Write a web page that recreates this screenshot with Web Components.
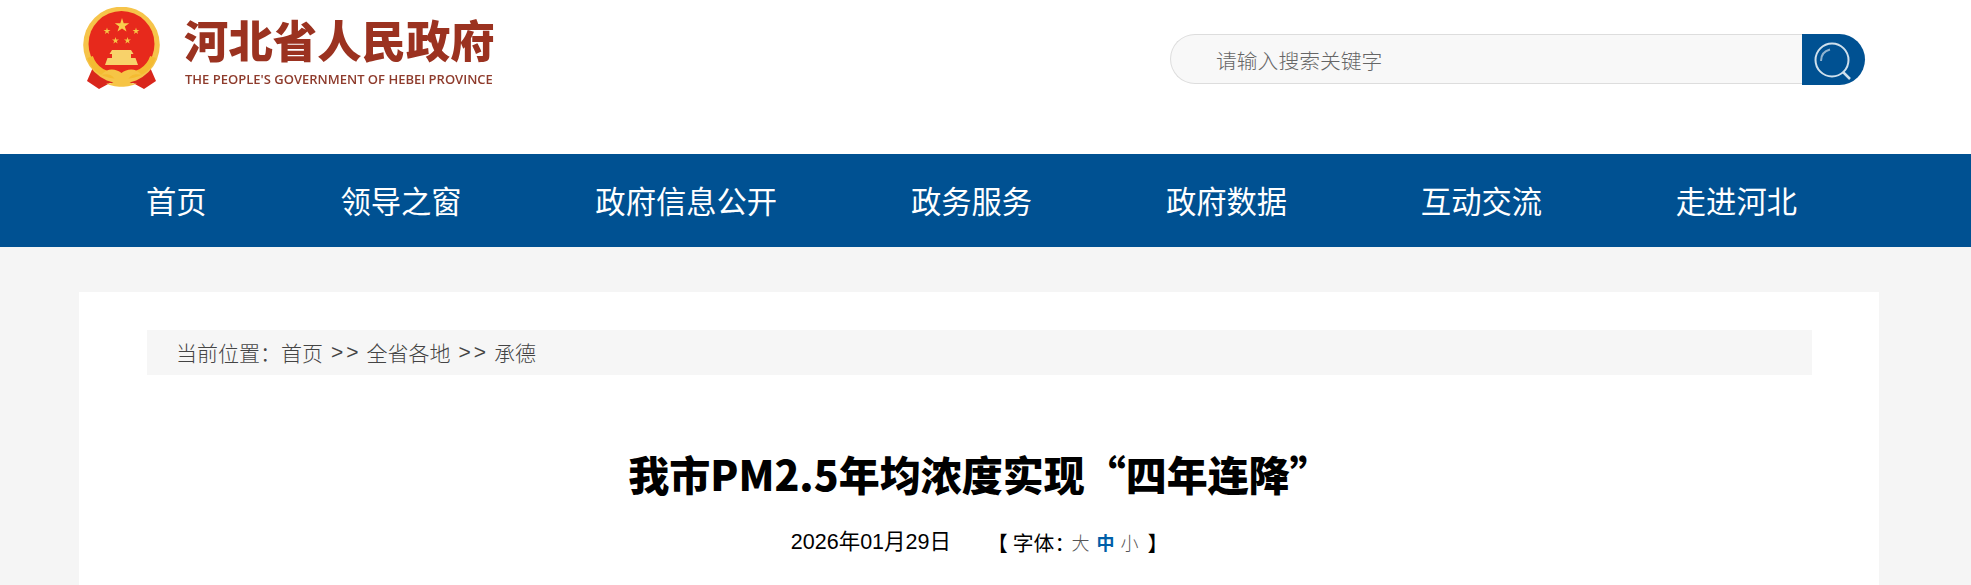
<!DOCTYPE html>
<html lang="zh-CN">
<head>
<meta charset="utf-8">
<title>我市PM2.5年均浓度实现“四年连降”</title>
<style>
  html, body { margin: 0; padding: 0; background: #f5f5f5; overflow: hidden; }
  body { height: 585px; font-family: "Noto Sans CJK SC", "Liberation Sans", sans-serif; }
</style>
</head>
<body>
<gov-header>
  <site-logo slot="logo"></site-logo>
  <site-search slot="search" placeholder="请输入搜索关键字"></site-search>
</gov-header>
<main-nav>
  <nav-item>首页</nav-item>
  <nav-item>领导之窗</nav-item>
  <nav-item>政府信息公开</nav-item>
  <nav-item>政务服务</nav-item>
  <nav-item>政府数据</nav-item>
  <nav-item>互动交流</nav-item>
  <nav-item>走进河北</nav-item>
</main-nav>
<article-card>
  <bread-crumb>
    <span>首页</span>
    <span>全省各地</span>
    <span>承德</span>
  </bread-crumb>
  <article-head date="2026年01月29日">我市PM2.5年均浓度实现“四年连降”</article-head>
</article-card>

<script>
class GovHeader extends HTMLElement {
  constructor() {
    super();
    this.attachShadow({ mode: 'open' }).innerHTML = `
      <style>
        :host { display: flex; justify-content: space-between; align-items: flex-start;
                height: 154px; box-sizing: border-box; background: #fff; padding: 0 106px 0 83px; }
      </style>
      <slot name="logo"></slot>
      <slot name="search"></slot>`;
  }
}

class SiteLogo extends HTMLElement {
  constructor() {
    super();
    this.attachShadow({ mode: 'open' }).innerHTML = `
      <style>
        :host { display: flex; gap: 25px; padding-top: 7px; }
        svg { display: block; flex: none; filter: blur(.5px); }
        .words { display: flex; flex-direction: column; width: 308px; color: #9b3220; filter: blur(.4px); }
        .cn { font: 900 44.400px/44px "Noto Sans CJK SC", sans-serif; margin-top: 10px; margin-left: -1px; white-space: nowrap; }
        .en { font: 600 13px/14px "Open Sans", sans-serif; margin-top: 11px; white-space: nowrap; color: #8e3b2c; }
      </style>
      <svg width="77" height="84" viewBox="0 0 77 84">
        <path d="M11 58 L4 74 L16 82 L27 76 L50 76 L61 82 L73 74 L66 58 Z" fill="#d9261c"/>
        <circle cx="38.500" cy="38" r="38.300" fill="#f6c44a"/>
        <circle cx="38.500" cy="37" r="33" fill="#e7291c"/>
        <path d="M39 11l1.700 5.200h5.500l-4.400 3.200 1.700 5.200-4.500-3.200-4.500 3.200 1.700-5.200-4.400-3.200h5.500z" fill="#f9cf4d"/>
        <path d="M24 20.500l.8 2.500h2.700l-2.200 1.600.8 2.500-2.100-1.500-2.100 1.500.8-2.500-2.200-1.600h2.700z" fill="#f6c445"/>
        <path d="M53 20.500l.8 2.500h2.700l-2.200 1.600.8 2.500-2.100-1.500-2.100 1.500.8-2.500-2.200-1.600h2.700z" fill="#f6c445"/>
        <path d="M32.500 30l.8 2.500h2.700l-2.200 1.600.8 2.500-2.100-1.500-2.100 1.500.8-2.500-2.200-1.600h2.700z" fill="#f6c445"/>
        <path d="M44.500 30l.8 2.500h2.700l-2.200 1.600.8 2.500-2.100-1.500-2.100 1.500.8-2.500-2.200-1.600h2.700z" fill="#f6c445"/>
        <path d="M29 43h19l2.500 4H48v4h4.500l2.500 7H22l2.500-7H29v-4h-2.500z" fill="#f8d26a"/>
        <path d="M7 50 C12 65 25 69 38.500 69 C52 69 65 65 70 50" fill="none" stroke="#f4bb32" stroke-width="6"/>
        <path d="M18 68 C25 60 33 62 38.500 66 C44 62 52 60 59 68 C52 66 47 68 45 73 C47 77 51 77 54 76 C47 81 30 81 23 76 C26 77 30 77 32 73 C30 68 25 66 18 68Z" fill="#f6c445"/>
      </svg>
      <div class="words">
        <div class="cn">河北省人民政府</div>
        <div class="en">THE PEOPLE'S GOVERNMENT OF HEBEI PROVINCE</div>
      </div>`;
  }
}

class SiteSearch extends HTMLElement {
  constructor() {
    super();
    this.attachShadow({ mode: 'open' }).innerHTML = `
      <style>
        :host { display: flex; margin-top: 34px; width: 695px; height: 51px; }
        .box { flex: 1; box-sizing: border-box; height: 50px; padding-left: 45px; background: #f8f8f8;
               border: 1px solid #ddd; border-right: 0; border-radius: 25px 0 0 25px;
               font: 300 20.800px/50px "Noto Sans CJK SC", sans-serif; color: #666; }
        .btn { flex: none; width: 63px; height: 51px; background: #005192; border-radius: 0 26px 26px 0; }
        svg { display: block; }
      </style>
      <div class="box"></div>
      <div class="btn">
        <svg width="63" height="51" viewBox="0 0 63 51" fill="none" stroke="#cfe0ec">
          <circle cx="30" cy="26" r="16.500" stroke-width="2"/>
          <path d="M41 38l7 7" stroke-width="2.500"/>
          <path d="M19 27c0-6 3-10 9-11.500" stroke="#8fb3cf" stroke-width="2"/>
        </svg>
      </div>`;
    this.shadowRoot.querySelector('.box').textContent = this.getAttribute('placeholder');
  }
}

class MainNav extends HTMLElement {
  constructor() {
    super();
    this.attachShadow({ mode: 'open' }).innerHTML = `
      <style>
        :host { display: flex; justify-content: space-between; align-items: center;
                height: 93px; box-sizing: border-box; background: #005192; padding: 0 174px 0 146px; }
      </style>
      <slot></slot>`;
  }
}

class NavItem extends HTMLElement {
  constructor() {
    super();
    this.attachShadow({ mode: 'open' }).innerHTML = `
      <style>
        :host { display: block; color: #fff; font: 400 30.300px/91px "Noto Sans CJK SC", sans-serif; white-space: nowrap; }
      </style>
      <slot></slot>`;
  }
}

class ArticleCard extends HTMLElement {
  constructor() {
    super();
    this.attachShadow({ mode: 'open' }).innerHTML = `
      <style>
        :host { display: block; box-sizing: border-box; width: 1800px; height: 293px; margin: 45px 0 0 79px;
                background: #fff; padding: 38px 67px 0 68px; }
      </style>
      <slot></slot>`;
  }
}

class BreadCrumb extends HTMLElement {
  constructor() {
    super();
    this.attachShadow({ mode: 'open' }).innerHTML = `
      <style>
        :host { display: flex; align-items: center; height: 45px; box-sizing: border-box; padding: 0 0 1px 29px;
                background: #f6f6f6; color: #444; font: 300 21px/44px "Noto Sans CJK SC", sans-serif; white-space: pre; }
      </style>
      <span>当前位置：</span><slot></slot>`;
  }
  connectedCallback() {
    const links = [...this.children];
    links.forEach((link, i) => {
      if (i > 0) {
        const sep = document.createElement('span');
        sep.textContent = '>>';
        sep.style.cssText = 'margin:0 5px 0 8px;letter-spacing:3px;font-family:"Liberation Sans",sans-serif';
        link.before(sep);
      }
    });
  }
}

class ArticleHead extends HTMLElement {
  constructor() {
    super();
    this.attachShadow({ mode: 'open' }).innerHTML = `
      <style>
        :host { display: block; text-align: center; color: #000; }
        h1 { margin: 68px 0 0; font: 900 41px/60px "Noto Sans CJK SC", sans-serif; }
        .meta { display: flex; justify-content: center; align-items: center; margin-top: 24px;
                font: 400 20.800px/30px "Noto Sans CJK SC", sans-serif; }
        .date { font-family: "Liberation Sans", "Noto Sans CJK SC", sans-serif; font-size: 21.500px; margin-right: 36px; }
        .size { display: flex; align-items: center; }
        .open { margin-right: 5px; }
        .colon { display: inline-block; width: 17px; }
        .size i, .size b { font-style: normal; width: 18px; font-size: 18px; }
        .size i { color: #555; font-weight: 300; }
        .size b { color: #005fa8; margin: 0 6px 0 7px; }
        .end { margin-left: 9px; }
      </style>
      <h1><slot></slot></h1>
      <div class="meta">
        <span class="date"></span>
        <span class="size"><span class="open">【</span><span>字体<span class="colon">：</span></span><i>大</i><b>中</b><i>小</i><span class="end">】</span></span>
      </div>`;
    this.shadowRoot.querySelector('.date').textContent = this.getAttribute('date');
  }
}

customElements.define('gov-header', GovHeader);
customElements.define('site-logo', SiteLogo);
customElements.define('site-search', SiteSearch);
customElements.define('main-nav', MainNav);
customElements.define('nav-item', NavItem);
customElements.define('article-card', ArticleCard);
customElements.define('bread-crumb', BreadCrumb);
customElements.define('article-head', ArticleHead);
</script>
</body>
</html>
